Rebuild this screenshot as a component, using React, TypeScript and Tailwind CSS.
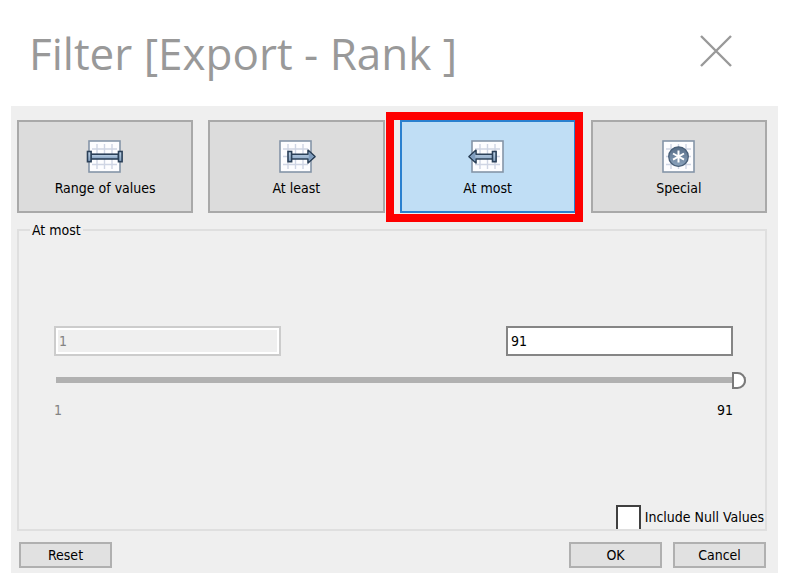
import { useState, type ReactNode } from "react";

type Mode = "range" | "least" | "most" | "special";

function GridSheet({ children }: { children: ReactNode }) {
  return (
    <svg viewBox="0 0 44 34" className="h-[34px] w-11" aria-hidden="true">
      <defs>
        <linearGradient id="steel" x1="0" y1="0" x2="0" y2="1">
          <stop offset="0" stopColor="#c3d6ea" />
          <stop offset="1" stopColor="#7f9cbc" />
        </linearGradient>
        <linearGradient id="ball" x1="0" y1="0" x2="0" y2="1">
          <stop offset="0" stopColor="#566c86" />
          <stop offset="1" stopColor="#8ba3bd" />
        </linearGradient>
      </defs>
      <rect x="6" y="1" width="31" height="31" fill="#fdfdff" stroke="#8595a8" strokeWidth="1.6" />
      <path d="M9 9H34M9 16.5H34M9 24.5H34M14 4V29M21.5 4V29M29 4V29" stroke="#cfd5e4" strokeWidth="1.4" fill="none" />
      {children}
    </svg>
  );
}

const bar = { fill: "url(#steel)", stroke: "#2b4058", strokeWidth: 1.6 };

const modes: { id: Mode; label: string; icon: ReactNode }[] = [
  {
    id: "range",
    label: "Range of values",
    icon: (
      <>
        <rect x="7.5" y="14.2" width="28" height="4.8" {...bar} />
        <rect x="4.5" y="11.5" width="3.6" height="10.2" {...bar} />
        <rect x="35.5" y="11.5" width="3.6" height="10.2" {...bar} />
      </>
    ),
  },
  {
    id: "least",
    label: "At least",
    icon: (
      <>
        <path d="M17 14.2H34V10.2L41 16.6L34 23V19H17Z" strokeLinejoin="round" {...bar} />
        <path d="M34.8 12L39.8 16.6L34.8 21.2Z" fill="#7f9dbf" />
        <rect x="14" y="11.5" width="3.6" height="10.2" {...bar} />
      </>
    ),
  },
  {
    id: "most",
    label: "At most",
    icon: (
      <>
        <path d="M27 14.2H10V10.2L3 16.6L10 23V19H27Z" strokeLinejoin="round" {...bar} />
        <path d="M9.2 12L4.2 16.6L9.2 21.2Z" fill="#7f9dbf" />
        <rect x="26.5" y="11.5" width="3.6" height="10.2" {...bar} />
      </>
    ),
  },
  {
    id: "special",
    label: "Special",
    icon: (
      <>
        <circle cx="21.5" cy="16.6" r="9.8" fill="url(#ball)" stroke="#4a6079" strokeWidth="1.3" />
        <path d="M21.5 10.6V22.6M16 13.5L27 19.7M27 13.5L16 19.7" stroke="#fff" strokeWidth="2" />
      </>
    ),
  },
];

function PushButton({ children }: { children: ReactNode }) {
  return (
    <button type="button" className="h-[26px] w-[93px] border-2 border-[#b0b0b0] bg-[#e1e1e1] leading-5">
      {children}
    </button>
  );
}

export default function App() {
  const [mode, setMode] = useState<Mode>("most");
  const [value, setValue] = useState("91");
  const [nulls, setNulls] = useState(false);

  return (
    <div className="bg-white pr-3 pl-[11px] font-['DejaVu_Sans_Condensed','DejaVu_Sans',sans-serif] text-[14px] leading-5 text-black">
      <header className="flex h-[106px] items-center justify-between pr-[45px] pl-[18px] text-[#999]">
        <h1 className="font-['Open_Sans',sans-serif] text-[44px] leading-[106px] whitespace-pre">Filter [Export - Rank ]</h1>
        <button type="button" aria-label="Close" className="mb-1">
          <svg viewBox="0 0 34 34" className="size-[34px]" aria-hidden="true">
            <path d="M2 2L32 32M32 2L2 32" stroke="#999" strokeWidth="2.4" />
          </svg>
        </button>
      </header>

      <main className="bg-[#efefef] pt-3.5 pr-[11px] pb-[5px] pl-1.5">
        <div className="grid grid-cols-4 gap-[15px]">
          {modes.map((m) => (
            <div key={m.id} className="relative">
              <button
                type="button"
                aria-pressed={mode === m.id}
                onClick={() => setMode(m.id)}
                className={
                  mode === m.id
                    ? "flex h-[93px] w-full flex-col items-center border-2 border-[#2a80cf] bg-[#c0def5] pt-[18px]"
                    : "flex h-[93px] w-full flex-col items-center border-2 border-[#a9a9a9] bg-[#dcdcdc] pt-[18px]"
                }
              >
                <GridSheet>{m.icon}</GridSheet>
                <span className="mt-1">{m.label}</span>
              </button>
              {m.id === "most" && (
                <div className="pointer-events-none absolute -top-2 -right-[7px] -bottom-[9px] -left-[14px] border-8 border-[#fe0000]" />
              )}
            </div>
          ))}
        </div>

        <fieldset className="mt-[7px] border-2 border-[#dfdfdf]">
          <legend className="ml-[11px] px-0.5">At most</legend>
          <div className="flex justify-between pt-[86px] pr-8 pl-[35px]">
            <input
              aria-label="Minimum"
              disabled
              value="1"
              className="h-[30px] w-[227px] border-2 border-[#cccccc] bg-[#efefef] px-[3px] text-[#838383] outline-2 -outline-offset-4 outline-white"
            />
            <input
              aria-label="Maximum"
              value={value}
              onChange={(e) => setValue(e.target.value)}
              className="h-[30px] w-[227px] border-2 border-[#858585] bg-white px-[3px] outline-none"
            />
          </div>
          <div className="mt-[15px] flex pr-[19px] pl-[37px]">
            <input
              type="range"
              aria-label="At most value"
              min={1}
              max={91}
              value={Number(value) || 1}
              onChange={(e) => setValue(e.target.value)}
              className="h-[17px] w-full appearance-none bg-transparent [&::-webkit-slider-runnable-track]:h-1.5 [&::-webkit-slider-runnable-track]:bg-[#b1b1b1] [&::-webkit-slider-thumb]:-mt-[5px] [&::-webkit-slider-thumb]:h-[17px] [&::-webkit-slider-thumb]:w-[14px] [&::-webkit-slider-thumb]:appearance-none [&::-webkit-slider-thumb]:rounded-r-[9px] [&::-webkit-slider-thumb]:border-2 [&::-webkit-slider-thumb]:border-[#7a7a7a] [&::-webkit-slider-thumb]:bg-white"
            />
          </div>
          <div className="mt-3 flex justify-between pr-8 pl-[35px]">
            <span className="text-[#838383]">1</span>
            <span>91</span>
          </div>
          <div className="mt-[85px] flex justify-end pr-px">
            <label className="flex h-6 items-center gap-1">
              <input
                type="checkbox"
                checked={nulls}
                onChange={(e) => setNulls(e.target.checked)}
                className="h-6 w-[25px] appearance-none border-2 border-b-0 border-[#404040] bg-white checked:bg-[#404040]"
              />
              <span>Include Null Values</span>
            </label>
          </div>
        </fieldset>

        <div className="mt-[11px] flex gap-[11px] pl-0.5 pr-px">
          <PushButton>Reset</PushButton>
          <span className="flex-1" />
          <PushButton>OK</PushButton>
          <PushButton>Cancel</PushButton>
        </div>
      </main>
    </div>
  );
}
